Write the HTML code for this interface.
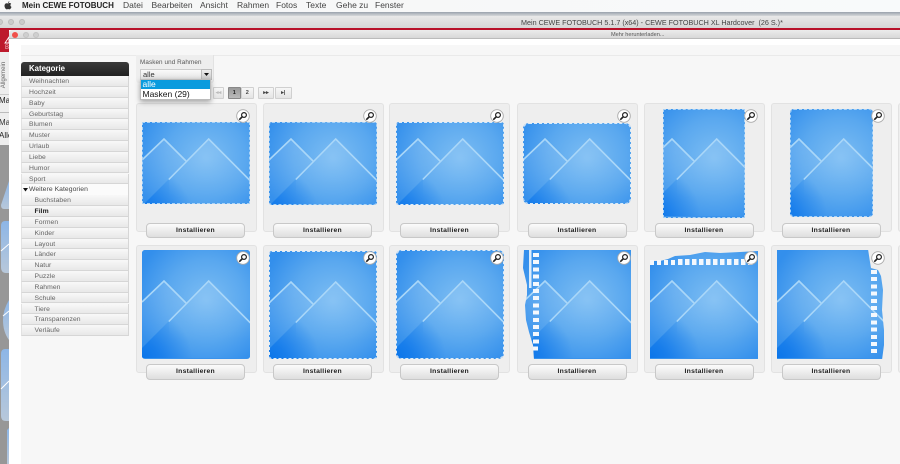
<!DOCTYPE html>
<html><head><meta charset="utf-8">
<style>
html,body{margin:0;padding:0}
body{width:900px;height:464px;overflow:hidden;position:relative;background:#f7f7f7;font-family:"Liberation Sans",sans-serif;filter:blur(.25px)}
div,span{position:absolute;box-sizing:border-box}
.m{top:0;font-size:8.5px;line-height:11px;color:#444;white-space:nowrap}
.c{width:121px;height:128.5px;background:#eee;border:1px solid #e2e2e2;border-radius:3px}
.t{overflow:hidden;background:#3a93ec}
.t svg{position:absolute;width:108px;height:108px}
.t::after{content:"";position:absolute;inset:0;border:1px dashed #a9d2f6;border-radius:inherit}
.t.w::after{border-color:#dcebf8}
.t.n::after{display:none}
.b{width:99px;height:15.5px;border:1px solid #c8c8c8;border-radius:4px;background:linear-gradient(#fbfbfb,#dedede);font-size:6.8px;font-weight:bold;color:#222;text-align:center;line-height:13.5px;letter-spacing:.25px}
.s{left:21px;width:108px;height:10.83px;background:linear-gradient(#f8f8f8,#e8e8e8);border-bottom:1px solid #d6d6d6;border-left:1px solid #e2e2e2;border-right:1px solid #d6d6d6;font-size:6.8px;line-height:11px;color:#666;padding-left:7px;white-space:nowrap;letter-spacing:.05px}
.s.u{padding-left:12.5px}
.p{top:87px;height:12px;background:linear-gradient(#f7f7f7,#e4e4e4);border:1px solid #d0d0d0;border-radius:1px;font-size:5.5px;line-height:10px;text-align:center;color:#444;font-weight:bold}
.z{width:14px;height:14px}
</style></head><body>

<!-- definitions -->
<svg width="0" height="0" style="position:absolute">
<defs>
<radialGradient id="g" gradientUnits="userSpaceOnUse" cx="64" cy="50" r="72">
<stop offset="0" stop-color="#7cbdf3"/><stop offset=".55" stop-color="#5aa8ef"/><stop offset="1" stop-color="#338fec"/></radialGradient>
<radialGradient id="d" gradientUnits="userSpaceOnUse" cx="0" cy="108" r="50"><stop offset="0" stop-color="#0672ea" stop-opacity=".9"/><stop offset=".6" stop-color="#0672ea" stop-opacity=".32"/><stop offset="1" stop-color="#0672ea" stop-opacity="0"/></radialGradient>
<linearGradient id="h" x1="0" y1="0" x2="0" y2="1"><stop offset="0" stop-color="#fff" stop-opacity=".13"/><stop offset="1" stop-color="#fff" stop-opacity="0"/></linearGradient>
<symbol id="a" viewBox="0 0 108 108">
<rect width="108" height="108" fill="url(#g)"/>
<polygon points="0,52 22,30.7 44,52 27,71 0,98" fill="url(#h)"/>
<polygon points="27,71 66.7,30.7 108,72 108,90 27,90" fill="url(#h)"/>
<polygon points="0,108 0,98 27,71 70,60 108,108" fill="url(#d)"/>
<polyline points="0,52 22,31 44,53" fill="none" stroke="#aad7f8" stroke-width="1.6"/>
<polyline points="27.3,71 66.7,31 108,72.5" fill="none" stroke="#aad7f8" stroke-width="1.6" stroke-linecap="round"/>
</symbol>
<symbol id="z" viewBox="0 0 14 14">
<circle cx="7" cy="7" r="6.3" fill="#fff" stroke="#aaa" stroke-width=".9"/>
<circle cx="8" cy="6" r="2.4" fill="#fff" stroke="#222" stroke-width="1.2"/>
<line x1="6.2" y1="7.8" x2="3.8" y2="10.2" stroke="#222" stroke-width="1.7" stroke-linecap="round"/>
</symbol>
<linearGradient id="sb" x1="0" y1="0" x2="0" y2="1"><stop offset="0" stop-color="#8db6e6"/><stop offset="1" stop-color="#b8c8da"/></linearGradient>
</defs>
</svg>

<!-- mac menu bar -->
<div style="left:0;top:0;width:900px;height:11.5px;background:linear-gradient(90deg,#f6f6f6,#f8fafb)"></div>
<svg style="position:absolute;left:4px;top:1px" width="8" height="9" viewBox="0 0 8 9"><path d="M5.4 0.3C5.4 1.2 4.8 1.9 4 2 3.9 1.2 4.6.4 5.4.3ZM4 2.4C4.4 2.4 4.9 2 5.6 2 6.2 2 6.8 2.3 7.2 2.9 6 3.6 6.2 5.3 7.5 5.9 7.1 7 6.4 8.4 5.5 8.4 5 8.4 4.7 8.1 4.1 8.1 3.5 8.1 3.2 8.4 2.7 8.4 1.7 8.4.5 6.5.5 4.8.5 3.2 1.5 2.2 2.6 2.2 3.1 2.2 3.6 2.4 4 2.4Z" fill="#333"/></svg>
<span class="m" style="left:22px;font-weight:bold;color:#222;font-size:8px">Mein CEWE FOTOBUCH</span>
<span class="m" style="left:123px">Datei</span>
<span class="m" style="left:151.5px">Bearbeiten</span>
<span class="m" style="left:200px">Ansicht</span>
<span class="m" style="left:237px">Rahmen</span>
<span class="m" style="left:276px">Fotos</span>
<span class="m" style="left:306px">Texte</span>
<span class="m" style="left:336px">Gehe zu</span>
<span class="m" style="left:375px">Fenster</span>

<!-- back window -->
<div style="left:0;top:11.5px;width:900px;height:4px;background:linear-gradient(#99a2ac,#d6d8da)"></div>
<div style="left:0;top:15.5px;width:900px;height:12.5px;background:linear-gradient(#e8e8e8,#d6d6d6)"></div>
<div style="left:-3px;top:19px;width:6px;height:6px;border-radius:50%;background:#cbcbcb;border:1px solid #bbb"></div>
<div style="left:8px;top:19px;width:6px;height:6px;border-radius:50%;background:#cbcbcb;border:1px solid #bbb"></div>
<div style="left:19px;top:19px;width:6px;height:6px;border-radius:50%;background:#cbcbcb;border:1px solid #bbb"></div>
<span style="left:521px;top:17px;font-size:7.2px;line-height:11px;color:#444;white-space:pre">Mein CEWE FOTOBUCH 5.1.7 (x64) - CEWE FOTOBUCH XL Hardcover  (26 S.)*</span>
<div style="left:0;top:28px;width:900px;height:2px;background:#b8122a"></div>

<!-- left strip of back window -->
<div style="left:0;top:30px;width:9px;height:22px;background:#bd1a2c"></div>
<svg style="position:absolute;left:4px;top:36px" width="6" height="8"><polygon points="5,1 1,7 5,7" fill="none" stroke="#fff" stroke-width=".9"/></svg>
<span style="left:5px;top:44px;font-size:6px;line-height:8px;color:#f1c5c9">B</span>
<div style="left:0;top:52px;width:9px;height:93px;background:#eee"></div>
<div style="left:0;top:94px;width:9px;height:1px;background:#ccc"></div>
<span style="left:-11px;top:71px;font-size:6px;line-height:8px;color:#666;transform:rotate(-90deg);width:30px;text-align:center">Allgemein</span>
<span style="left:-1px;top:96px;font-size:8px;line-height:10px;color:#222">Ma</span>
<div style="left:0;top:112px;width:9px;height:1px;background:#bbb"></div>
<span style="left:-1px;top:118px;font-size:8px;line-height:10px;color:#333">Mas</span>
<span style="left:-1px;top:131px;font-size:8px;line-height:10px;color:#222">Alle</span>
<div style="left:0;top:145px;width:9px;height:319px;background:#979797"></div>
<svg style="position:absolute;left:0;top:145px" width="9" height="319" viewBox="0 145 9 319">
<path d="M9 181 L1 205 Q1 209 4 209 L9 209Z" fill="url(#sb)"/>
<path d="M9 221 L5 221 Q1 221 1 226 L1 267 Q1 273 6 273 L9 273Z" fill="url(#sb)"/>
<line x1="1" y1="251" x2="9" y2="244" stroke="#fff" stroke-width="1"/>
<path d="M9 300 Q3 310 3 320 Q3 332 9 340Z" fill="url(#sb)"/>
<line x1="3" y1="316" x2="9" y2="311" stroke="#fff" stroke-width="1"/>
<path d="M9 349 L5 349 Q1 349 1 354 L1 416 Q1 421 6 421 L9 421Z" fill="url(#sb)"/>
<line x1="1" y1="389" x2="9" y2="381" stroke="#fff" stroke-width="1"/>
<path d="M9 428 L7 430 L7 464 L9 464Z" fill="url(#sb)"/>
</svg>

<!-- front window -->
<div style="left:9px;top:30px;width:891px;height:434px;background:#fff"></div>
<div style="left:9px;top:30px;width:891px;height:9px;background:linear-gradient(#ececec,#d8d8d8);border-bottom:1px solid #bbb;border-radius:3px 0 0 0"></div>
<div style="left:12px;top:32px;width:6px;height:6px;border-radius:50%;background:#f0504a"></div>
<div style="left:23px;top:32px;width:6px;height:6px;border-radius:50%;background:#cfcfcf;border:1px solid #c2c2c2"></div>
<div style="left:32.5px;top:32px;width:6px;height:6px;border-radius:50%;background:#cfcfcf;border:1px solid #c2c2c2"></div>
<span style="left:611px;top:31px;font-size:5.6px;line-height:8px;color:#555;white-space:nowrap">Mehr herunterladen...</span>
<div style="left:21px;top:45px;width:879px;height:419px;background:#f7f7f7"></div>
<div style="left:21px;top:55px;width:879px;height:1px;background:#eaeaea"></div>

<!-- sidebar -->
<div style="left:21px;top:62px;width:108px;height:14px;background:linear-gradient(#3a3a3a,#222);border-radius:3px 3px 0 0;color:#fff;font-size:7.8px;font-weight:bold;line-height:14px;padding-left:8px">Kategorie</div>
<div class="s" style="top:76px">Weihnachten</div>
<div class="s" style="top:86.8px">Hochzeit</div>
<div class="s" style="top:97.7px">Baby</div>
<div class="s" style="top:108.5px">Geburtstag</div>
<div class="s" style="top:119.3px">Blumen</div>
<div class="s" style="top:130.2px">Muster</div>
<div class="s" style="top:141px">Urlaub</div>
<div class="s" style="top:151.8px">Liebe</div>
<div class="s" style="top:162.6px">Humor</div>
<div class="s" style="top:173.5px">Sport</div>
<div class="s" style="top:184.3px;background:#fbfbfb;border-bottom:0;color:#444">Weitere Kategorien</div>
<svg style="position:absolute;left:23px;top:187.5px" width="5" height="4"><polygon points="0,0 5,0 2.5,3.5" fill="#111"/></svg>
<div class="s u" style="top:195.2px">Buchstaben</div>
<div class="s u" style="top:206px;font-weight:bold;color:#222">Film</div>
<div class="s u" style="top:216.8px">Formen</div>
<div class="s u" style="top:227.7px">Kinder</div>
<div class="s u" style="top:238.5px">Layout</div>
<div class="s u" style="top:249.3px">Länder</div>
<div class="s u" style="top:260.2px">Natur</div>
<div class="s u" style="top:271px">Puzzle</div>
<div class="s u" style="top:281.8px">Rahmen</div>
<div class="s u" style="top:292.6px">Schule</div>
<div class="s u" style="top:303.5px">Tiere</div>
<div class="s u" style="top:314.3px">Transparenzen</div>
<div class="s u" style="top:325.2px">Verläufe</div>

<!-- pager -->
<div class="p" style="left:213px;width:11px;color:#bbb">◂◂</div>
<div class="p" style="left:228px;width:12.5px;background:linear-gradient(#999,#bbb);border-color:#888;color:#222">1</div>
<div class="p" style="left:241px;width:12.5px">2</div>
<div class="p" style="left:258px;width:16px">▸▸</div>
<div class="p" style="left:275px;width:16.5px">▸|</div>

<!-- cards row 1 -->
<div class="c" style="left:135.5px;top:103px"></div>
<div class="c" style="left:262.5px;top:103px"></div>
<div class="c" style="left:389px;top:103px"></div>
<div class="c" style="left:516.5px;top:103px"></div>
<div class="c" style="left:643.5px;top:103px"></div>
<div class="c" style="left:770.5px;top:103px"></div>
<div class="c" style="left:897.5px;top:103px"></div>
<!-- cards row 2 -->
<div class="c" style="left:135.5px;top:244.5px"></div>
<div class="c" style="left:262.5px;top:244.5px"></div>
<div class="c" style="left:389px;top:244.5px"></div>
<div class="c" style="left:516.5px;top:244.5px"></div>
<div class="c" style="left:643.5px;top:244.5px"></div>
<div class="c" style="left:770.5px;top:244.5px"></div>
<div class="c" style="left:897.5px;top:244.5px"></div>

<!-- thumbs row 1 -->
<div class="t" style="left:142px;top:122px;width:108px;height:82px"><svg style="left:0;top:-14px"><use href="#a"/></svg></div>
<div class="t" style="left:269px;top:121.5px;width:108px;height:83.5px;border-radius:3px"><svg style="left:0;top:-13.5px"><use href="#a"/></svg></div>
<div class="t w" style="left:396px;top:122px;width:108px;height:83px;border-radius:3px"><svg style="left:0;top:-14px"><use href="#a"/></svg></div>
<div class="t w" style="left:523px;top:122.5px;width:108px;height:81px;border-radius:6px"><svg style="left:0;top:-14.5px"><use href="#a"/></svg></div>
<div class="t" style="left:663px;top:109px;width:81.5px;height:108.5px"><svg style="left:-13px;top:-1px"><use href="#a"/></svg></div>
<div class="t" style="left:789.5px;top:109px;width:83px;height:108px;border-radius:4px"><svg style="left:-13px;top:-1px"><use href="#a"/></svg></div>
<!-- thumbs row 2 -->
<div class="t n" style="left:142px;top:250px;width:108px;height:109px;border-radius:3px"><svg style="left:0;top:0"><use href="#a"/></svg></div>
<div class="t w" style="left:268.5px;top:250.5px;width:108px;height:108px;border-radius:3px"><svg style="left:0;top:0"><use href="#a"/></svg></div>
<div class="t w" style="left:396px;top:250px;width:108px;height:109px;border-radius:6px"><svg style="left:0;top:0"><use href="#a"/></svg></div>
<div class="t n" style="left:523px;top:250px;width:108px;height:109px"><svg style="left:0;top:0"><use href="#a"/></svg></div>
<div class="t n" style="left:649.5px;top:250px;width:108.5px;height:109px"><svg style="left:0;top:0"><use href="#a"/></svg></div>
<div class="t n" style="left:777px;top:250px;width:108px;height:109px"><svg style="left:0;top:0"><use href="#a"/></svg></div>

<!-- film overlays -->
<svg style="position:absolute;left:0;top:0" width="900" height="464">
<g fill="#eee">
<polygon points="522,249 524,250 523,268 527,285 527,295 525,305 526,320 529,332 533,345 534,360 522,360"/>
<polygon points="649,249 758,249 758,251 740,252 720,253 705,252 690,255 675,256 668,259 660,261 649,261"/>
<polygon points="886,249 868,249 870,262 871,268 878,270 881,276 883,290 882,310 884,330 884,345 882,360 886,360"/>
</g>
<rect x="529" y="250" width="2.5" height="38" fill="#dcecfb"/>
<g fill="#f4f8fd">
<rect x="533" y="253" width="6" height="4"/><rect x="533" y="260" width="6" height="4"/><rect x="533" y="267.5" width="6" height="4"/><rect x="533" y="274.5" width="6" height="4"/><rect x="533" y="282" width="6" height="4"/><rect x="533" y="289" width="6" height="4"/><rect x="533" y="296" width="6" height="4"/><rect x="533" y="303.5" width="6" height="4"/><rect x="533" y="310.5" width="6" height="4"/><rect x="533" y="318" width="6" height="4"/><rect x="533" y="325" width="6" height="4"/><rect x="533" y="332" width="6" height="4"/><rect x="533" y="339.5" width="6" height="4"/><rect x="533" y="346.5" width="5" height="4"/>
<rect x="650" y="260" width="4" height="5"/><rect x="657" y="260" width="4" height="5"/><rect x="664" y="260" width="4" height="5"/><rect x="671" y="260" width="4" height="5"/><rect x="678" y="259" width="4.5" height="6"/><rect x="685" y="259" width="4.5" height="6"/><rect x="692" y="259" width="4.5" height="6"/><rect x="699" y="259" width="4.5" height="6"/><rect x="706" y="259" width="4.5" height="6"/><rect x="713" y="259" width="4.5" height="6"/><rect x="720" y="259" width="4.5" height="6"/><rect x="727" y="259" width="4.5" height="6"/><rect x="734" y="259" width="4.5" height="6"/><rect x="741" y="259" width="4.5" height="6"/><rect x="748" y="259" width="4.5" height="6"/>
<rect x="871" y="270" width="6" height="4"/><rect x="871" y="277" width="6" height="4"/><rect x="871" y="284.5" width="6" height="4"/><rect x="871" y="291.5" width="6" height="4"/><rect x="871" y="299" width="6" height="4"/><rect x="871" y="306" width="6" height="4"/><rect x="871" y="313" width="6" height="4"/><rect x="871" y="320.5" width="6" height="4"/><rect x="871" y="327.5" width="6" height="4"/><rect x="871" y="335" width="6" height="4"/><rect x="871" y="342" width="6" height="4"/><rect x="871" y="349" width="6" height="4"/>
</g>
</svg>

<!-- zoom icons -->
<svg class="z" style="position:absolute;left:236px;top:109px"><use href="#z"/></svg>
<svg class="z" style="position:absolute;left:362.5px;top:109px"><use href="#z"/></svg>
<svg class="z" style="position:absolute;left:489.5px;top:109px"><use href="#z"/></svg>
<svg class="z" style="position:absolute;left:617px;top:109px"><use href="#z"/></svg>
<svg class="z" style="position:absolute;left:744px;top:109px"><use href="#z"/></svg>
<svg class="z" style="position:absolute;left:871px;top:109px"><use href="#z"/></svg>
<svg class="z" style="position:absolute;left:236px;top:251px"><use href="#z"/></svg>
<svg class="z" style="position:absolute;left:362.5px;top:251px"><use href="#z"/></svg>
<svg class="z" style="position:absolute;left:489.5px;top:251px"><use href="#z"/></svg>
<svg class="z" style="position:absolute;left:617px;top:251px"><use href="#z"/></svg>
<svg class="z" style="position:absolute;left:744px;top:251px"><use href="#z"/></svg>
<svg class="z" style="position:absolute;left:871px;top:251px"><use href="#z"/></svg>

<!-- buttons -->
<div class="b" style="left:146px;top:222.5px">Installieren</div>
<div class="b" style="left:273px;top:222.5px">Installieren</div>
<div class="b" style="left:400px;top:222.5px">Installieren</div>
<div class="b" style="left:527.5px;top:222.5px">Installieren</div>
<div class="b" style="left:654.5px;top:222.5px">Installieren</div>
<div class="b" style="left:781.5px;top:222.5px">Installieren</div>
<div class="b" style="left:146px;top:364px">Installieren</div>
<div class="b" style="left:273px;top:364px">Installieren</div>
<div class="b" style="left:400px;top:364px">Installieren</div>
<div class="b" style="left:527.5px;top:364px">Installieren</div>
<div class="b" style="left:654.5px;top:364px">Installieren</div>
<div class="b" style="left:781.5px;top:364px">Installieren</div>

<!-- filter panel -->
<div style="left:136px;top:55px;width:78px;height:28px;background:#eee;border-right:1px solid #e2e2e2;border-radius:0 0 3px 3px"></div>
<span style="left:140px;top:59px;font-size:6.3px;line-height:8px;color:#555;white-space:nowrap;letter-spacing:.1px">Masken und Rahmen</span>
<div style="left:140px;top:69px;width:72px;height:10.5px;background:linear-gradient(#fafafa,#e4e4e4);border:1px solid #ccc;font-size:7.5px;line-height:9px;color:#333;padding-left:2px">alle</div>
<div style="left:201px;top:69px;width:11px;height:10.5px;background:linear-gradient(#eee,#ccc);border:1px solid #bbb"></div>
<svg style="position:absolute;left:204px;top:72.5px" width="5" height="4"><polygon points="0,0 5,0 2.5,3" fill="#111"/></svg>
<div style="left:140px;top:79px;width:71px;height:20.5px;background:#fff;border:1px solid #bbb;box-shadow:0 2px 5px rgba(0,0,0,.35)"></div>
<div style="left:141px;top:80px;width:69px;height:9px;background:#0a9bde;color:#fff;font-size:8.5px;line-height:9px;padding-left:1.5px">alle</div>
<span style="left:142.5px;top:89px;font-size:8.5px;line-height:10px;color:#111;white-space:nowrap">Masken (29)</span>

</body></html>
